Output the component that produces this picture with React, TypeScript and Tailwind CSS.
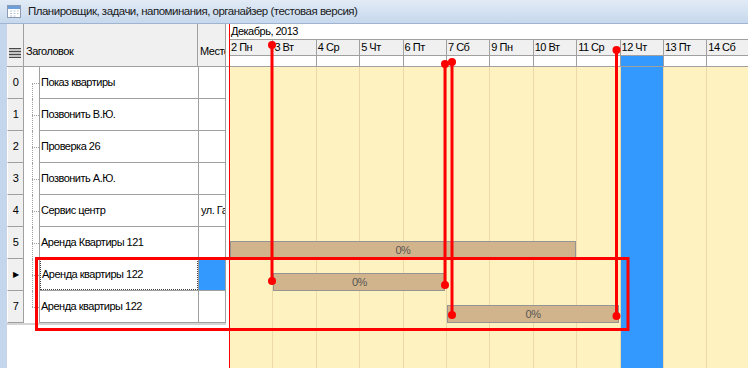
import React from 'react';

const days = ['2 Пн', '3 Вт', '4 Ср', '5 Чт', '6 Пт', '7 Сб', '9 Пн', '10 Вт', '11 Ср', '12 Чт', '13 Пт', '14 Сб'];
const todayIndex = 9;
const colW = 43.4;

const rows = [
  { n: '0', title: 'Показ квартиры', place: '' },
  { n: '1', title: 'Позвонить В.Ю.', place: '' },
  { n: '2', title: 'Проверка 26', place: '' },
  { n: '3', title: 'Позвонить А.Ю.', place: '' },
  { n: '4', title: 'Сервис центр', place: 'ул. Гагарина' },
  { n: '5', title: 'Аренда Квартиры 121', place: '' },
  { n: '6', title: 'Аренда квартиры 122', place: '' },
  { n: '7', title: 'Аренда квартиры 122', place: '' },
];
const selectedRow = 6;

// gantt bars: row index, first day column, number of columns
const bars = [
  { row: 5, start: 0, span: 8 },
  { row: 6, start: 1, span: 4 },
  { row: 7, start: 5, span: 4 },
];

const TitleIcon = () => (
  <svg width="14" height="13" viewBox="0 0 14 13">
    <rect x="0.5" y="0.5" width="13" height="12" fill="#ffffff" stroke="#8a9bb3" />
    <rect x="1" y="1" width="12" height="3" fill="#6f9fd8" />
    <path d="M3 6h2M6.5 6h2M10 6h1.5M3 8.5h2M6.5 8.5h2M10 8.5h1.5M3 11h2M6.5 11h2" stroke="#b7c2d2" strokeWidth="1" />
  </svg>
);

const ListIcon = () => (
  <svg width="12" height="10" viewBox="0 0 12 10">
    <path d="M0 0.5h12M0 3.5h12M0 6.5h12M0 9.5h12" stroke="#4a4a4a" strokeWidth="1" />
    <path d="M0 2h12M0 5h12M0 8h12" stroke="#9a9a9a" strokeWidth="1" />
  </svg>
);

const GridRow = ({ row, index }: { row: (typeof rows)[number]; index: number }) => {
  const selected = index === selectedRow;
  const first = index === 0;
  const last = index === rows.length - 1;
  return (
    <div className="flex h-[32px]">
      <div className="w-[17px] flex items-center justify-center bg-[#f0f0f0] border-r border-b border-[#a0a0a0] border-l border-l-white">
        {selected ? <span className="text-[8px] leading-none">▶</span> : row.n}
      </div>
      <div className="w-[15px] relative">
        <div
          className={`absolute left-[8px] border-l border-dotted border-[#a0a0a0] ${first ? 'top-[16px]' : 'top-0'} ${last ? 'h-[16px]' : 'bottom-0'}`}
        />
        <div className="absolute left-[8px] right-0 top-[16px] border-t border-dotted border-[#a0a0a0]" />
      </div>
      <div className="w-[159px] border-l border-b border-[#a0a0a0] flex">
        <div
          className={`flex-1 flex items-center pl-[1px] whitespace-nowrap overflow-hidden ${selected ? 'border border-dotted border-[#404040]' : ''}`}
        >
          {row.title}
        </div>
      </div>
      <div
        className={`w-[28px] border-x border-b border-[#a0a0a0] flex items-center pl-[2px] whitespace-nowrap overflow-hidden ${selected ? 'bg-[#3399ff]' : ''}`}
      >
        {row.place}
      </div>
      <div className="w-[3px]" />
    </div>
  );
};

const App: React.FC = () => {
  return (
    <div className="w-[748px] h-[368px] relative overflow-hidden bg-white text-[11px] tracking-[-0.5px] text-black font-['Liberation_Sans',Arial,sans-serif]">
      {/* window title */}
      <div className="h-[24px] flex items-center gap-[7px] pl-[7px] bg-gradient-to-b from-[#e2ebf6] to-[#c6d8ed] border-b border-[#9fb4cf]">
        <TitleIcon />
        <span className="text-[11.5px] tracking-[-0.5px] text-[#1a1a1a]">Планировщик, задачи, напоминания, органайзер (тестовая версия)</span>
      </div>

      <div className="flex h-[344px]">
        <div className="w-[7px] bg-[#c3d6ec]" />

        {/* task grid */}
        <div className="w-[222px] flex flex-col">
          <div className="h-[43px] flex bg-[#f0f0f0] border-b border-[#a0a0a0]">
            <div className="w-[17px] flex items-end justify-center pb-[8px] border-r border-[#a0a0a0]">
              <ListIcon />
            </div>
            <div className="w-[174px] flex items-end pl-[2px] pb-[7px] border-r border-[#a0a0a0]">Заголовок</div>
            <div className="w-[28px] flex items-end pl-[2px] pb-[7px] border-r border-[#a0a0a0] whitespace-nowrap overflow-hidden">
              Место
            </div>
            <div className="w-[3px] bg-white" />
          </div>
          {rows.map((r, i) => (
            <GridRow key={i} row={r} index={i} />
          ))}
          <div className="h-[2px] w-[219px] bg-[#d4d4d4]" />
        </div>

        {/* gantt */}
        <div className="flex-1 border-l border-[#ff0000] flex flex-col overflow-hidden">
          <div className="h-[16px] flex items-center pl-[1px] border-b border-[#a0a0a0] whitespace-nowrap">Декабрь, 2013</div>
          <div className="h-[16px] flex bg-[#f0f0f0] border-b border-[#a0a0a0]">
            {days.map((d) => (
              <div key={d} className="w-[43.4px] shrink-0 flex items-center pl-[1px] border-r border-[#a0a0a0] whitespace-nowrap">
                {d}
              </div>
            ))}
          </div>
          <div className="h-[11px] flex border-b border-[#a0a0a0]">
            {days.map((d, i) => (
              <div
                key={d}
                className={`w-[43.4px] shrink-0 border-r border-[#a0a0a0] ${i === todayIndex ? 'bg-[#3399ff]' : ''}`}
              />
            ))}
          </div>
          <div className="flex-1 relative flex bg-[#fef3c0]">
            {days.map((d, i) => (
              <div
                key={d}
                className={`w-[43.4px] shrink-0 border-r border-[#ecd9a6] ${i === todayIndex ? 'bg-[#3399ff]' : ''}`}
              />
            ))}
            {bars.map((b, i) => (
              <div
                key={i}
                className="absolute h-[18px] flex items-center justify-center bg-[#d2b48c] border border-[#949494] text-[#555555]"
                style={{ left: b.start * colW, width: b.span * colW - 1.5, top: b.row * 32 + 14 }}
              >
                0%
              </div>
            ))}
          </div>
        </div>
      </div>

      {/* red annotations drawn over the screenshot */}
      <svg className="absolute inset-0 pointer-events-none" width="748" height="368" viewBox="0 0 748 368">
        <rect x="36.5" y="258.5" width="591.5" height="71" fill="none" stroke="#ff0000" strokeWidth="3" />
        <g stroke="#ff0000" strokeWidth="3" fill="#ff0000">
          <line x1="272" y1="45" x2="272" y2="281" />
          <line x1="445" y1="64" x2="445" y2="285" />
          <line x1="452" y1="62" x2="452" y2="315" />
          <line x1="616.5" y1="50" x2="616.5" y2="316" />
        </g>
        <g fill="#ff0000">
          <circle cx="272" cy="45" r="4" />
          <circle cx="272" cy="281" r="4" />
          <circle cx="445" cy="64" r="4" />
          <circle cx="445" cy="285" r="4" />
          <circle cx="452" cy="62" r="4" />
          <circle cx="452" cy="315" r="4" />
          <circle cx="616.5" cy="50" r="4" />
          <circle cx="616.5" cy="316" r="4" />
        </g>
      </svg>
    </div>
  );
};

export default App;
